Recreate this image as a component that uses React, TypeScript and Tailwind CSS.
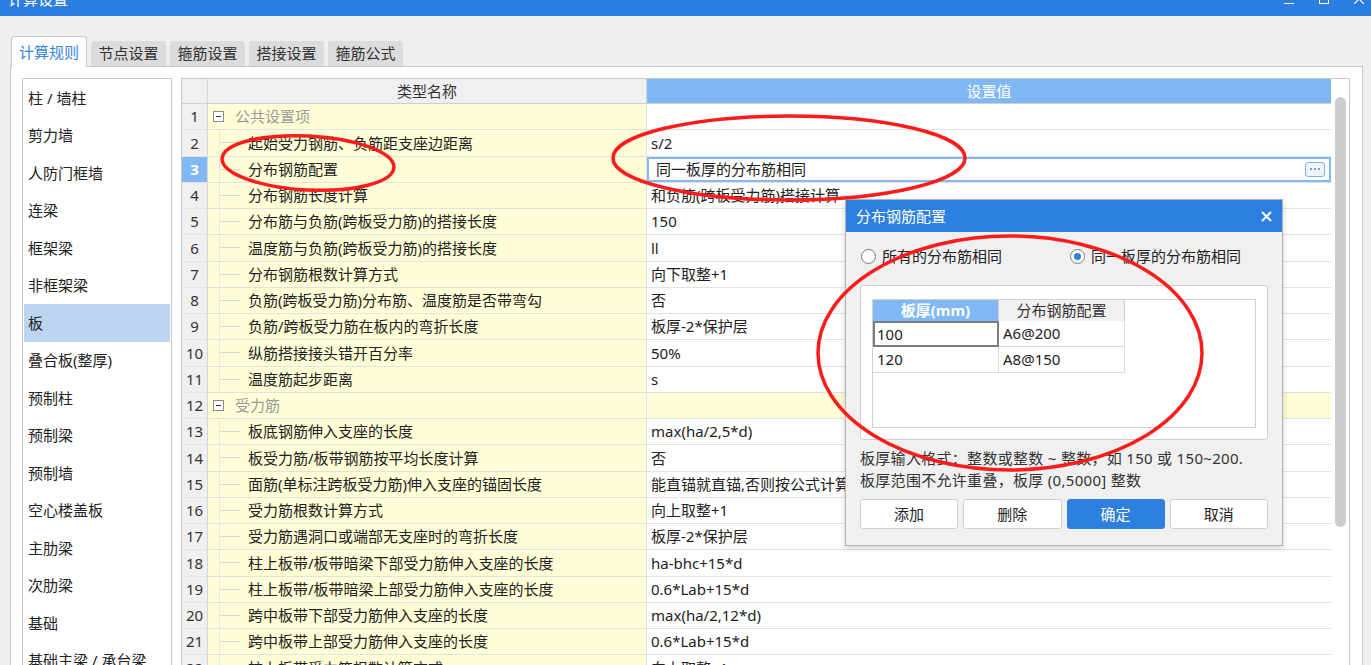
import React from "react";

interface Row {
  no: number;
  name: string;
  value: string;
  group?: boolean;
}

const rows: Row[] = [
  { no: 1, name: "公共设置项", value: "", group: true },
  { no: 2, name: "起始受力钢筋、负筋距支座边距离", value: "s/2" },
  { no: 3, name: "分布钢筋配置", value: "同一板厚的分布筋相同" },
  { no: 4, name: "分布钢筋长度计算", value: "和负筋(跨板受力筋)搭接计算" },
  { no: 5, name: "分布筋与负筋(跨板受力筋)的搭接长度", value: "150" },
  { no: 6, name: "温度筋与负筋(跨板受力筋)的搭接长度", value: "ll" },
  { no: 7, name: "分布钢筋根数计算方式", value: "向下取整+1" },
  { no: 8, name: "负筋(跨板受力筋)分布筋、温度筋是否带弯勾", value: "否" },
  { no: 9, name: "负筋/跨板受力筋在板内的弯折长度", value: "板厚-2*保护层" },
  { no: 10, name: "纵筋搭接接头错开百分率", value: "50%" },
  { no: 11, name: "温度筋起步距离", value: "s" },
  { no: 12, name: "受力筋", value: "", group: true },
  { no: 13, name: "板底钢筋伸入支座的长度", value: "max(ha/2,5*d)" },
  { no: 14, name: "板受力筋/板带钢筋按平均长度计算", value: "否" },
  { no: 15, name: "面筋(单标注跨板受力筋)伸入支座的锚固长度", value: "能直锚就直锚,否则按公式计算" },
  { no: 16, name: "受力筋根数计算方式", value: "向上取整+1" },
  { no: 17, name: "受力筋遇洞口或端部无支座时的弯折长度", value: "板厚-2*保护层" },
  { no: 18, name: "柱上板带/板带暗梁下部受力筋伸入支座的长度", value: "ha-bhc+15*d" },
  { no: 19, name: "柱上板带/板带暗梁上部受力筋伸入支座的长度", value: "0.6*Lab+15*d" },
  { no: 20, name: "跨中板带下部受力筋伸入支座的长度", value: "max(ha/2,12*d)" },
  { no: 21, name: "跨中板带上部受力筋伸入支座的长度", value: "0.6*Lab+15*d" },
  { no: 22, name: "柱上板带受力筋根数计算方式", value: "向上取整+1" },
];

const categories = [
  "柱 / 墙柱",
  "剪力墙",
  "人防门框墙",
  "连梁",
  "框架梁",
  "非框架梁",
  "板",
  "叠合板(整厚)",
  "预制柱",
  "预制梁",
  "预制墙",
  "空心楼盖板",
  "主肋梁",
  "次肋梁",
  "基础",
  "基础主梁 / 承台梁",
];

const tabs = ["计算规则", "节点设置", "箍筋设置", "搭接设置", "箍筋公式"];

const Radio = ({ checked, label }: { checked?: boolean; label: string }) => (
  <div className="flex items-center">
    <span className="w-[15px] h-[15px] rounded-full border border-[#7a7a7a] bg-white flex items-center justify-center">
      {checked && <span className="w-[7px] h-[7px] rounded-full bg-[#2d7fe0]" />}
    </span>
    <span className="ml-[6px]">{label}</span>
  </div>
);

const App: React.FC = () => {
  return (
    <div className="w-[1371px] h-[665px] overflow-hidden bg-[#efefef] relative flex flex-col text-[15px] text-[#222] font-['Noto_Sans','Noto_Sans_CJK_SC',sans-serif]">
      {/* title bar */}
      <div className="h-[16px] shrink-0 bg-[#2b7de0] flex overflow-hidden">
        <span className="ml-[8px] -mt-[10px] text-white leading-[18px]">计算设置</span>
        <div className="ml-auto mr-[7px] flex items-start">
          <div className="w-[10px] h-px bg-white mt-[3px]" />
          <div className="ml-[25px] w-[10px] h-[10px] border border-white -mt-[6px]" />
          <svg className="ml-[25px] -mt-[6px]" width="10" height="10" viewBox="0 0 10 10">
            <path d="M0 0L10 10M10 0L0 10" stroke="white" strokeWidth="1.2" />
          </svg>
        </div>
      </div>

      {/* tabs */}
      <div className="h-[50px] shrink-0 flex items-end pl-[11px] gap-[4px]">
        {tabs.map((t, i) =>
          i === 0 ? (
            <div
              key={t}
              className="relative z-10 -mb-px h-[31px] w-[76px] bg-white border border-b-0 border-[#c8c8c8] rounded-t-[3px] flex items-center justify-center text-[#3a86df]"
            >
              {t}
            </div>
          ) : (
            <div
              key={t}
              className="h-[25px] w-[75px] bg-[#dcdcdc] rounded-t-[3px] flex items-center justify-center text-[#333]"
            >
              {t}
            </div>
          )
        )}
      </div>

      {/* panel */}
      <div className="ml-[10px] w-[1353px] h-[640px] shrink-0 bg-white border border-[#c8c8c8] flex pl-[11px] pt-[11px] gap-[9px]">
        {/* category list */}
        <div className="w-[150px] h-[620px] border border-[#c8c8c8] overflow-hidden">
          {categories.map((c) => (
            <div
              key={c}
              className={`h-[37.5px] mx-px pl-[4px] flex items-center ${c === "板" ? "bg-[#bcd5f0]" : ""}`}
            >
              {c}
            </div>
          ))}
        </div>

        {/* settings grid */}
        <div className="w-[1169px] h-[620px] border border-[#c8c8c8] flex overflow-hidden">
          <div className="w-[1149px]">
            <div className="h-[25px] flex border-b border-[#cfcfcf]">
              <div className="w-[26px] bg-[#f0f0f0] border-r border-[#d6d6d6]" />
              <div className="w-[439px] bg-[#f0f0f0] border-r border-[#d6d6d6] flex items-center justify-center text-[#333]">
                类型名称
              </div>
              <div className="flex-1 bg-[#7fb8f4] flex items-center justify-center text-white">设置值</div>
            </div>
            {rows.map((r) => (
              <div key={r.no} className="h-[26.25px] flex border-b border-[#e2e2e2]">
                <div
                  className={`w-[26px] shrink-0 border-r border-[#d6d6d6] flex items-center justify-center ${
                    r.no === 3 ? "bg-[#80b9f5] text-white font-bold" : "bg-[#f0f0f0] text-[#333]"
                  }`}
                >
                  {r.no}
                </div>
                <div className="w-[439px] shrink-0 bg-[#fffed6] border-r border-[#e2e2e2] flex items-center whitespace-nowrap">
                  {r.group ? (
                    <>
                      <span className="ml-[5px] w-[11px] h-[11px] border border-[#8a8a8a] bg-white flex items-center justify-center">
                        <span className="w-[5px] h-px bg-[#333]" />
                      </span>
                      <span className="ml-[11px] text-[#9a9a9a]">{r.name}</span>
                    </>
                  ) : (
                    <>
                      <span className="w-[12px] self-stretch border-r border-[#e6e6e6]" />
                      <span className="w-[20px] h-px bg-[#d9d9d9]" />
                      <span className="ml-[8px]">{r.name}</span>
                    </>
                  )}
                </div>
                {r.no === 3 ? (
                  <div className="flex-1 border-2 border-[#86b7ee] bg-white flex items-center pl-[7px] pr-[4px]">
                    <span>{r.value}</span>
                    <span className="ml-auto w-[20px] h-[15px] border border-[#7fb3ef] rounded-[3px] bg-[#eef5fd] flex items-center justify-center gap-[2px]">
                      <span className="w-[2px] h-[2px] bg-[#6a9fe0]" />
                      <span className="w-[2px] h-[2px] bg-[#6a9fe0]" />
                      <span className="w-[2px] h-[2px] bg-[#6a9fe0]" />
                    </span>
                  </div>
                ) : (
                  <div
                    className={`flex-1 flex items-center pl-[4px] whitespace-nowrap overflow-hidden ${
                      r.no === 12 ? "bg-[#fffed6]" : "bg-white"
                    }`}
                  >
                    {r.value}
                  </div>
                )}
              </div>
            ))}
          </div>
          {/* scrollbar */}
          <div className="w-[18px] bg-white">
            <div className="mt-[18px] ml-[4px] w-[11px] h-[430px] rounded-full bg-[#cdcdcd]" />
          </div>
        </div>
      </div>

      {/* dialog */}
      <div className="absolute left-[845px] top-[199px] w-[438px] h-[347px] border border-[#b4b4b4] bg-[#f0f0f0] shadow-[0_2px_6px_rgba(0,0,0,0.2)] flex flex-col">
        <div className="h-[32px] bg-[#2d7fe0] flex items-center pl-[10px] pr-[10px] text-white">
          <span>分布钢筋配置</span>
          <svg className="ml-auto" width="11" height="11" viewBox="0 0 11 11">
            <path d="M1 1L10 10M10 1L1 10" stroke="white" strokeWidth="2" />
          </svg>
        </div>
        <div className="px-[14px] flex flex-col">
          <div className="h-[48px] flex items-center pl-px">
            <div className="w-[209px]">
              <Radio label="所有的分布筋相同" />
            </div>
            <Radio checked label="同一板厚的分布筋相同" />
          </div>
          <div className="mt-[5px] h-[155px] bg-white border border-[#cfcfcf] rounded-[3px] px-[11px] pt-[13px] pb-[11px]">
            <div className="h-full border border-[#d0d0d0] bg-white">
              <div className="flex h-[21px]">
                <div className="w-[126px] bg-[#80b9f5] text-white font-bold flex items-center justify-center border-r border-[#d0d0d0]">
                  板厚(mm)
                </div>
                <div className="w-[126px] bg-[#f0f0f0] text-[#333] flex items-center justify-center border-r border-[#d0d0d0]">
                  分布钢筋配置
                </div>
              </div>
              <div className="flex h-[26px]">
                <div className="w-[126px] border-2 border-[#7c7c7c] flex items-center pl-[2px]">100</div>
                <div className="w-[126px] border-r border-b border-[#dcdcdc] flex items-center pl-[4px]">A6@200</div>
              </div>
              <div className="flex h-[26px]">
                <div className="w-[126px] border-r border-b border-[#dcdcdc] flex items-center pl-[4px]">120</div>
                <div className="w-[126px] border-r border-b border-[#dcdcdc] flex items-center pl-[4px]">A8@150</div>
              </div>
            </div>
          </div>
          <div className="mt-[7px] leading-[22px] tracking-[0.3px] text-[#333]">
            <div>板厚输入格式：整数或整数 ~ 整数，如 150 或 150~200.</div>
            <div>板厚范围不允许重叠，板厚 (0,5000] 整数</div>
          </div>
          <div className="mt-[8px] flex gap-[5px]">
            <button className="flex-1 h-[30px] bg-white border border-[#cfcfcf] rounded-[3px]">添加</button>
            <button className="flex-1 h-[30px] bg-white border border-[#cfcfcf] rounded-[3px]">删除</button>
            <button className="flex-1 h-[30px] bg-[#2d7fe0] border border-[#2d7fe0] rounded-[3px] text-white">确定</button>
            <button className="flex-1 h-[30px] bg-white border border-[#cfcfcf] rounded-[3px]">取消</button>
          </div>
        </div>
      </div>

      {/* red annotation marks */}
      <svg className="absolute left-0 top-0 pointer-events-none" width="1371" height="665">
        <ellipse cx="308" cy="163" rx="86" ry="27" transform="rotate(3 308 163)" fill="none" stroke="#fb1c1c" strokeWidth="3.5" />
        <ellipse cx="789" cy="158" rx="176" ry="42" fill="none" stroke="#fb1c1c" strokeWidth="3.5" />
        <ellipse cx="1010" cy="353" rx="192" ry="117" fill="none" stroke="#fb1c1c" strokeWidth="3.5" />
      </svg>
    </div>
  );
};

export default App;
